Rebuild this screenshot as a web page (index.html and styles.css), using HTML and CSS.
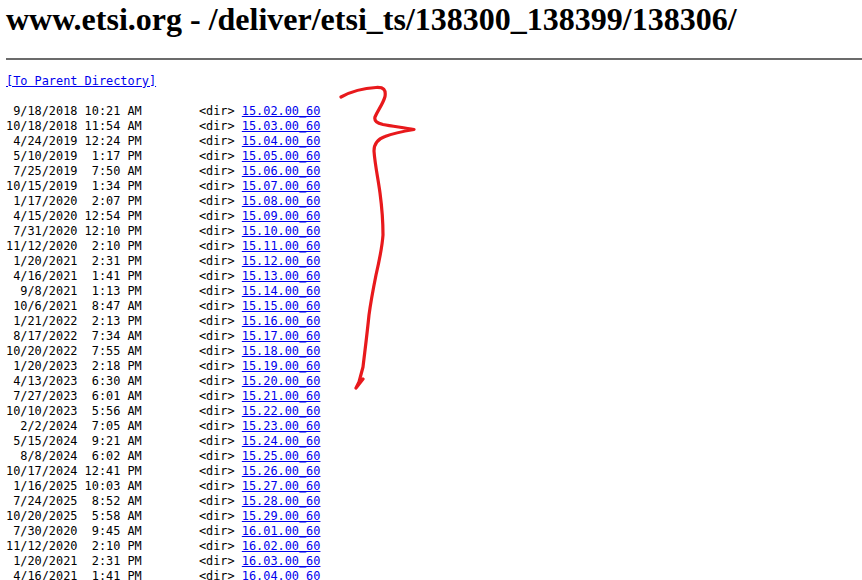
FILE: index.html
```html
<!DOCTYPE html>
<html lang="en">
<head>
<meta charset="utf-8">
<title>www.etsi.org - /deliver/etsi_ts/138300_138399/138306/</title>
<link rel="stylesheet" href="styles.css">
</head>
<body>
<h1 class="title">www.etsi.org - /deliver/etsi_ts/138300_138399/138306/</h1>
<hr class="rule">
<pre class="listing"><a href="#">[To Parent Directory]</a>

 9/18/2018 10:21 AM        &lt;dir&gt; <a href="#">15.02.00_60</a>
10/18/2018 11:54 AM        &lt;dir&gt; <a href="#">15.03.00_60</a>
 4/24/2019 12:24 PM        &lt;dir&gt; <a href="#">15.04.00_60</a>
 5/10/2019  1:17 PM        &lt;dir&gt; <a href="#">15.05.00_60</a>
 7/25/2019  7:50 AM        &lt;dir&gt; <a href="#">15.06.00_60</a>
10/15/2019  1:34 PM        &lt;dir&gt; <a href="#">15.07.00_60</a>
 1/17/2020  2:07 PM        &lt;dir&gt; <a href="#">15.08.00_60</a>
 4/15/2020 12:54 PM        &lt;dir&gt; <a href="#">15.09.00_60</a>
 7/31/2020 12:10 PM        &lt;dir&gt; <a href="#">15.10.00_60</a>
11/12/2020  2:10 PM        &lt;dir&gt; <a href="#">15.11.00_60</a>
 1/20/2021  2:31 PM        &lt;dir&gt; <a href="#">15.12.00_60</a>
 4/16/2021  1:41 PM        &lt;dir&gt; <a href="#">15.13.00_60</a>
  9/8/2021  1:13 PM        &lt;dir&gt; <a href="#">15.14.00_60</a>
 10/6/2021  8:47 AM        &lt;dir&gt; <a href="#">15.15.00_60</a>
 1/21/2022  2:13 PM        &lt;dir&gt; <a href="#">15.16.00_60</a>
 8/17/2022  7:34 AM        &lt;dir&gt; <a href="#">15.17.00_60</a>
10/20/2022  7:55 AM        &lt;dir&gt; <a href="#">15.18.00_60</a>
 1/20/2023  2:18 PM        &lt;dir&gt; <a href="#">15.19.00_60</a>
 4/13/2023  6:30 AM        &lt;dir&gt; <a href="#">15.20.00_60</a>
 7/27/2023  6:01 AM        &lt;dir&gt; <a href="#">15.21.00_60</a>
10/10/2023  5:56 AM        &lt;dir&gt; <a href="#">15.22.00_60</a>
  2/2/2024  7:05 AM        &lt;dir&gt; <a href="#">15.23.00_60</a>
 5/15/2024  9:21 AM        &lt;dir&gt; <a href="#">15.24.00_60</a>
  8/8/2024  6:02 AM        &lt;dir&gt; <a href="#">15.25.00_60</a>
10/17/2024 12:41 PM        &lt;dir&gt; <a href="#">15.26.00_60</a>
 1/16/2025 10:03 AM        &lt;dir&gt; <a href="#">15.27.00_60</a>
 7/24/2025  8:52 AM        &lt;dir&gt; <a href="#">15.28.00_60</a>
10/20/2025  5:58 AM        &lt;dir&gt; <a href="#">15.29.00_60</a>
 7/30/2020  9:45 AM        &lt;dir&gt; <a href="#">16.01.00_60</a>
11/12/2020  2:10 PM        &lt;dir&gt; <a href="#">16.02.00_60</a>
 1/20/2021  2:31 PM        &lt;dir&gt; <a href="#">16.03.00_60</a>
 4/16/2021  1:41 PM        &lt;dir&gt; <a href="#">16.04.00_60</a>
</pre>
<svg class="scribble" width="862" height="580" viewBox="0 0 862 580" aria-hidden="true">
<path class="scribble-line" d="M341 97C352 91 366 88 376 87.500C384 87 386 90 385 96.500C383 104 378 110 375 117C374 121 377 123 383 124.500C393 126.500 404 127.500 414 129.500C405 131 394 133 385 136.500C378 139 374 143 374 151C375 165 378 178 380 193C382 208 383 222 383 235C382 249 379 262 376 275C373 290 371 300 369 315C367 335 365 350 363 367L359 382L356 388M356 388L363 379"/>
</svg>
</body>
</html>
```

FILE: styles.css
```css
html, body {
  margin: 0;
  padding: 0;
  background: #fff;
  height: 580px;
  overflow: hidden;
}
body {
  padding: 0 0 0 6px;
  color: #000;
  position: relative;
}
.title {
  margin: 0;
  padding-top: 1px;
  font: bold 32px/37px "Liberation Serif", "Times New Roman", serif;
  white-space: nowrap;
}
.rule {
  margin: 20px 0 0;
  height: 0;
  border: 0;
  border-top: 2px solid #6b6b6b;
}
.listing {
  margin: 14px 0 0;
  font: 11.9px/15px "DejaVu Sans Mono", monospace;
  letter-spacing: -0.013px;
}
.listing a {
  color: #0000ee;
  text-decoration: underline;
}
.scribble {
  position: absolute;
  left: 0;
  top: 0;
  pointer-events: none;
}
.scribble-line {
  fill: none;
  stroke: #e8191c;
  stroke-width: 3.2;
  stroke-linecap: round;
  stroke-linejoin: round;
}
```
